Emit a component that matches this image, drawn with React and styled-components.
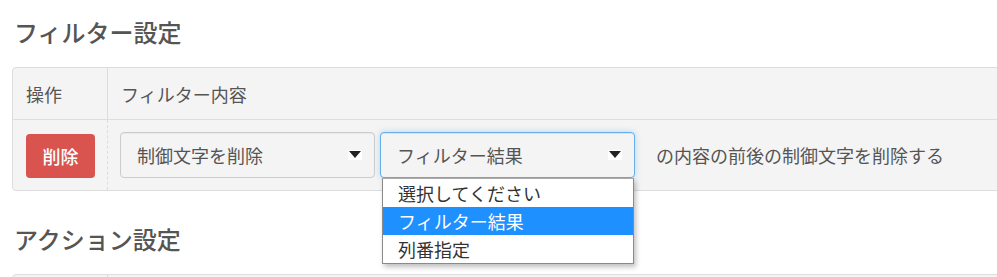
import React from "react";
import styled, { createGlobalStyle } from "styled-components";

const Global = createGlobalStyle`
  html, body { margin: 0; padding: 0; background: #fff; overflow: hidden; }
  body { font-family: "Noto Sans CJK JP", "Noto Sans", sans-serif; color: #555; }
`;

const Page = styled.div`
  padding: 0 0 0 12px;
  width: 1100px;
`;

const Heading = styled.h2`
  font-size: 24px;
  line-height: 26px;
  font-weight: 500;
  color: #555;
  margin: ${(p) => (p.$first ? "19px" : "35px")} 0 22px 0;
  padding-left: 2px;
`;

const Card = styled.div`
  border: 1px solid #ddd;
  border-radius: 4px;
  background: #f4f4f4;
  display: grid;
  grid-template-columns: 95px 1fr;
`;

const HeadCell = styled.div`
  height: 51px;
  border-bottom: 1px solid #ddd;
  border-right: ${(p) => (p.$divider ? "1px solid #ddd" : "none")};
  display: flex;
  align-items: center;
  padding-left: ${(p) => p.$pad}px;
  font-size: 18px;
  color: #555;
`;

const BodyCell = styled.div`
  height: 70px;
  border-right: ${(p) => (p.$divider ? "1px dashed #ddd" : "none")};
  display: flex;
  align-items: center;
  padding-left: ${(p) => p.$pad}px;
  gap: 5px;
  font-size: 18px;
  color: #555;
`;

const DeleteButton = styled.button`
  width: 69px;
  height: 44px;
  border: none;
  border-radius: 4px;
  background: #d9534f;
  color: #fff;
  font-family: inherit;
  font-size: 18px;
  font-weight: 500;
  padding: 0;
  margin-top: 1px;
`;

const SelectWrap = styled.div`
  position: relative;
`;

const SelectBox = styled.div`
  box-sizing: border-box;
  width: 255px;
  height: 46px;
  border: 1px solid ${(p) => (p.$focus ? "#66afe9" : "#ccc")};
  border-radius: 4px;
  background: #f4f4f4;
  box-shadow: ${(p) =>
    p.$focus
      ? "inset 0 1px 1px rgba(0,0,0,.075), 0 0 6px rgba(102,175,233,.45)"
      : "inset 0 1px 1px rgba(0,0,0,.05)"};
  display: flex;
  align-items: center;
  justify-content: space-between;
  padding: 0 12px 0 16px;
  font-size: 18px;
  color: #555;
`;

const Arrow = () => (
  <svg width="14" height="10" viewBox="0 0 14 10">
    <rect width="14" height="10" fill="#fff" />
    <polygon points="1,1 13,1 7,8" fill="#222" />
  </svg>
);

const Dropdown = styled.ul`
  position: absolute;
  left: 2px;
  top: 46px;
  width: 252px;
  box-sizing: border-box;
  margin: 0;
  padding: 0;
  list-style: none;
  background: #fff;
  border: 1px solid #8a8a8a;
  border-top-color: #aaa;
  box-shadow: 2px 3px 5px rgba(0, 0, 0, 0.25);
  z-index: 5;
`;

const Option = styled.li`
  height: 28px;
  line-height: 28px;
  padding-left: 15px;
  font-size: 18px;
  color: ${(p) => (p.$active ? "#fff" : "#333")};
  background: ${(p) => (p.$active ? "#1e90ff" : "#fff")};
`;

const Trailing = styled.span`
  margin-left: 16px;
`;

const Row = styled.div`
  display: contents;
`;

export default function App() {
  return (
    <Page>
      <Global />
      <Heading $first>フィルター設定</Heading>
      <Card>
        <Row>
          <HeadCell $divider $pad={13}>操作</HeadCell>
          <HeadCell $pad={13}>フィルター内容</HeadCell>
        </Row>
        <Row>
          <BodyCell $divider $pad={13}>
            <DeleteButton>削除</DeleteButton>
          </BodyCell>
          <BodyCell $pad={12}>
            <SelectBox>
              <span>制御文字を削除</span>
              <Arrow />
            </SelectBox>
            <SelectWrap>
              <SelectBox $focus>
                <span>フィルター結果</span>
                <Arrow />
              </SelectBox>
              <Dropdown>
                <Option>選択してください</Option>
                <Option $active>フィルター結果</Option>
                <Option>列番指定</Option>
              </Dropdown>
            </SelectWrap>
            <Trailing>の内容の前後の制御文字を削除する</Trailing>
          </BodyCell>
        </Row>
      </Card>
      <Heading>アクション設定</Heading>
      <Card>
        <HeadCell $divider $pad={13} />
        <HeadCell $pad={13} />
      </Card>
    </Page>
  );
}
